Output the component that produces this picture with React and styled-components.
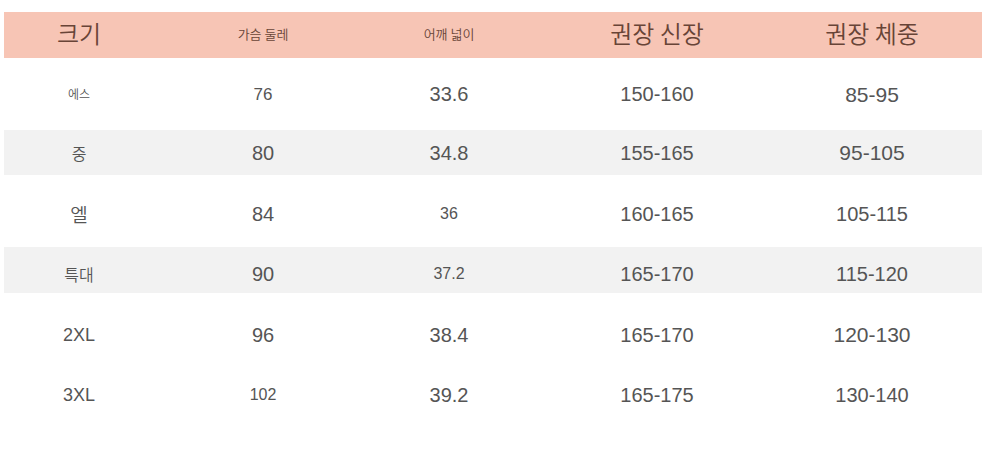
import React from "react";
import styled, { createGlobalStyle } from "styled-components";

const Global = createGlobalStyle`
  html, body { margin: 0; padding: 0; background: #ffffff; }
  body { font-family: "Liberation Sans", "Noto Sans CJK KR", sans-serif; }
`;

const Sheet = styled.div`
  width: 990px;
  height: 458px;
  box-sizing: border-box;
  padding: 12px 8px 0 4px;
  background: #ffffff;
  overflow: hidden;
`;

const Row = styled.div`
  display: grid;
  grid-template-columns: 150px 218px 154px 262px 168px 1fr;
  align-items: center;
  height: ${(p) => p.$h}px;
  box-sizing: border-box;
  padding-top: ${(p) => p.$shift || 0}px;
  background: ${(p) => (p.$shade ? "#f2f2f2" : "#ffffff")};
`;

const HeaderRow = styled(Row)`
  background: #f7c5b5;
  padding-bottom: 4px;
`;

const HeadCell = styled.div`
  text-align: center;
  font-family: "Noto Sans CJK KR", "Liberation Sans", sans-serif;
  font-size: ${(p) => p.$size}px;
  font-weight: 350;
  color: #684437;
  line-height: 1;
  white-space: nowrap;
`;

const Cell = styled.div`
  text-align: center;
  font-family: ${(p) =>
    p.$kr
      ? `"Noto Sans CJK KR", "Liberation Sans", sans-serif`
      : `"Liberation Sans", "Noto Sans CJK KR", sans-serif`};
  font-weight: ${(p) => (p.$kr ? 350 : 400)};
  font-size: ${(p) => p.$size}px;
  color: #555555;
  line-height: 1;
  white-space: nowrap;
`;

const header = [
  ["크기", 24],
  ["가슴 둘레", 13],
  ["어깨 넓이", 13],
  ["권장 신장", 24],
  ["권장 체중", 24],
];

const rows = [
  { h: 72, shade: false, shift: 0, cells: [["에스", 12, true], ["76", 17], ["33.6", 20], ["150-160", 20], ["85-95", 21]] },
  { h: 45, shade: true, shift: 0, cells: [["중", 16, true], ["80", 20], ["34.8", 20], ["155-165", 20], ["95-105", 21]] },
  { h: 72, shade: false, shift: 5, cells: [["엘", 19, true], ["84", 20], ["36", 16], ["160-165", 20], ["105-115", 20]] },
  { h: 46, shade: true, shift: 7, cells: [["특대", 16, true], ["90", 20], ["37.2", 16], ["165-170", 20], ["115-120", 20]] },
  { h: 83, shade: false, shift: 0, cells: [["2XL", 18], ["96", 20], ["38.4", 20], ["165-170", 20], ["120-130", 21]] },
  { h: 38, shade: false, shift: 0, cells: [["3XL", 18], ["102", 16], ["39.2", 20], ["165-175", 20], ["130-140", 20]] },
];

export default function App() {
  return (
    <>
      <Global />
      <Sheet>
        <HeaderRow $h={46}>
          {header.map(([t, s]) => (
            <HeadCell key={t} $size={s}>{t}</HeadCell>
          ))}
        </HeaderRow>
        {rows.map((r, i) => (
          <Row key={i} $h={r.h} $shade={r.shade} $shift={r.shift}>
            {r.cells.map(([t, s, kr], j) => (
              <Cell key={j} $size={s} $kr={kr}>{t}</Cell>
            ))}
          </Row>
        ))}
      </Sheet>
    </>
  );
}
